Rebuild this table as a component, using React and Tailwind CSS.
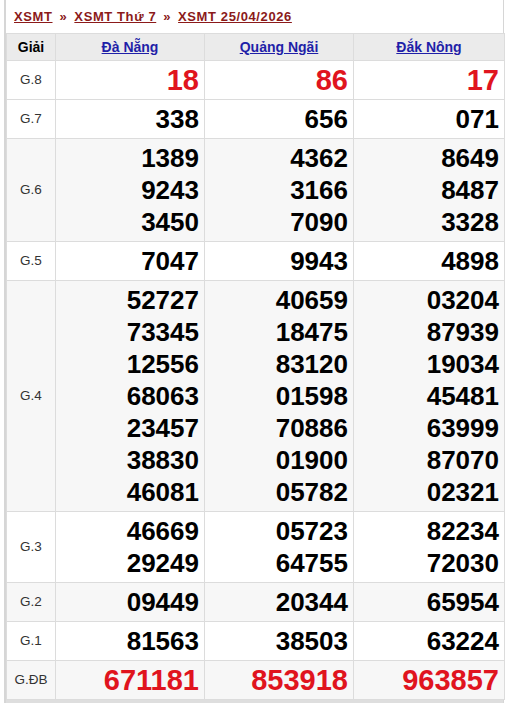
const provinces = ['Đà Nẵng', 'Quảng Ngãi', 'Đắk Nông'];

const rows = [
  { label: 'G.8', red: true, bg: 'bg-white', values: [['18'], ['86'], ['17']] },
  { label: 'G.7', bg: 'bg-white', values: [['338'], ['656'], ['071']] },
  { label: 'G.6', bg: 'bg-[#f7f7f7]', values: [['1389', '9243', '3450'], ['4362', '3166', '7090'], ['8649', '8487', '3328']] },
  { label: 'G.5', bg: 'bg-white', values: [['7047'], ['9943'], ['4898']] },
  {
    label: 'G.4',
    bg: 'bg-[#f7f7f7]',
    values: [
      ['52727', '73345', '12556', '68063', '23457', '38830', '46081'],
      ['40659', '18475', '83120', '01598', '70886', '01900', '05782'],
      ['03204', '87939', '19034', '45481', '63999', '87070', '02321'],
    ],
  },
  { label: 'G.3', bg: 'bg-white', values: [['46669', '29249'], ['05723', '64755'], ['82234', '72030']] },
  { label: 'G.2', bg: 'bg-[#f7f7f7]', values: [['09449'], ['20344'], ['65954']] },
  { label: 'G.1', bg: 'bg-white', values: [['81563'], ['38503'], ['63224']] },
  { label: 'G.ĐB', red: true, bg: 'bg-[#f7f7f7]', values: [['671181'], ['853918'], ['963857']] },
];

export default function App() {
  return (
    <div className="w-[512px] h-[703px] bg-white overflow-hidden font-['Liberation_Sans',Arial,sans-serif]">
      <div className="ml-[4px] w-[500px] border-l-2 border-r border-[#d6d6d6] pb-[3px] bg-[#dedede]">
        <div className="bg-white">
          <div className="h-[33px] flex items-center pl-[8px] text-[13px] font-bold tracking-[0.6px] text-[#8b1a1a]">
            <a href="#" className="underline">XSMT</a>
            <span className="mx-[7px]">»</span>
            <a href="#" className="underline">XSMT Thứ 7</a>
            <span className="mx-[7px]">»</span>
            <a href="#" className="underline">XSMT 25/04/2026</a>
          </div>
          <table className="w-[498px] border-collapse table-fixed">
            <colgroup>
              <col className="w-[49px]" />
              <col className="w-[149px]" />
              <col className="w-[149px]" />
              <col className="w-[151px]" />
            </colgroup>
            <thead>
              <tr className="bg-[#ebebeb] h-[27px]">
                <th className="border border-[#dcdcdc] text-[14px] font-bold text-black">Giải</th>
                {provinces.map((p) => (
                  <th key={p} className="border border-[#dcdcdc] text-[14px] font-bold">
                    <a href="#" className="underline text-[#1f1fa8]">{p}</a>
                  </th>
                ))}
              </tr>
            </thead>
            <tbody>
              {rows.map((r) => (
                <tr key={r.label} className={r.bg}>
                  <td className="border border-[#dcdcdc] text-center text-[13.5px] text-[#333]">{r.label}</td>
                  {r.values.map((col, i) => (
                    <td
                      key={i}
                      className={`border border-[#dcdcdc] text-right pr-[5px] py-[3px] font-bold ${
                        r.red ? 'text-[#e0141e] text-[29px] leading-[32px]' : 'text-black text-[26px] leading-[32px]'
                      }`}
                    >
                      {col.map((n, j) => (
                        <div key={j}>{n}</div>
                      ))}
                    </td>
                  ))}
                </tr>
              ))}
            </tbody>
          </table>
        </div>
      </div>
    </div>
  );
}
